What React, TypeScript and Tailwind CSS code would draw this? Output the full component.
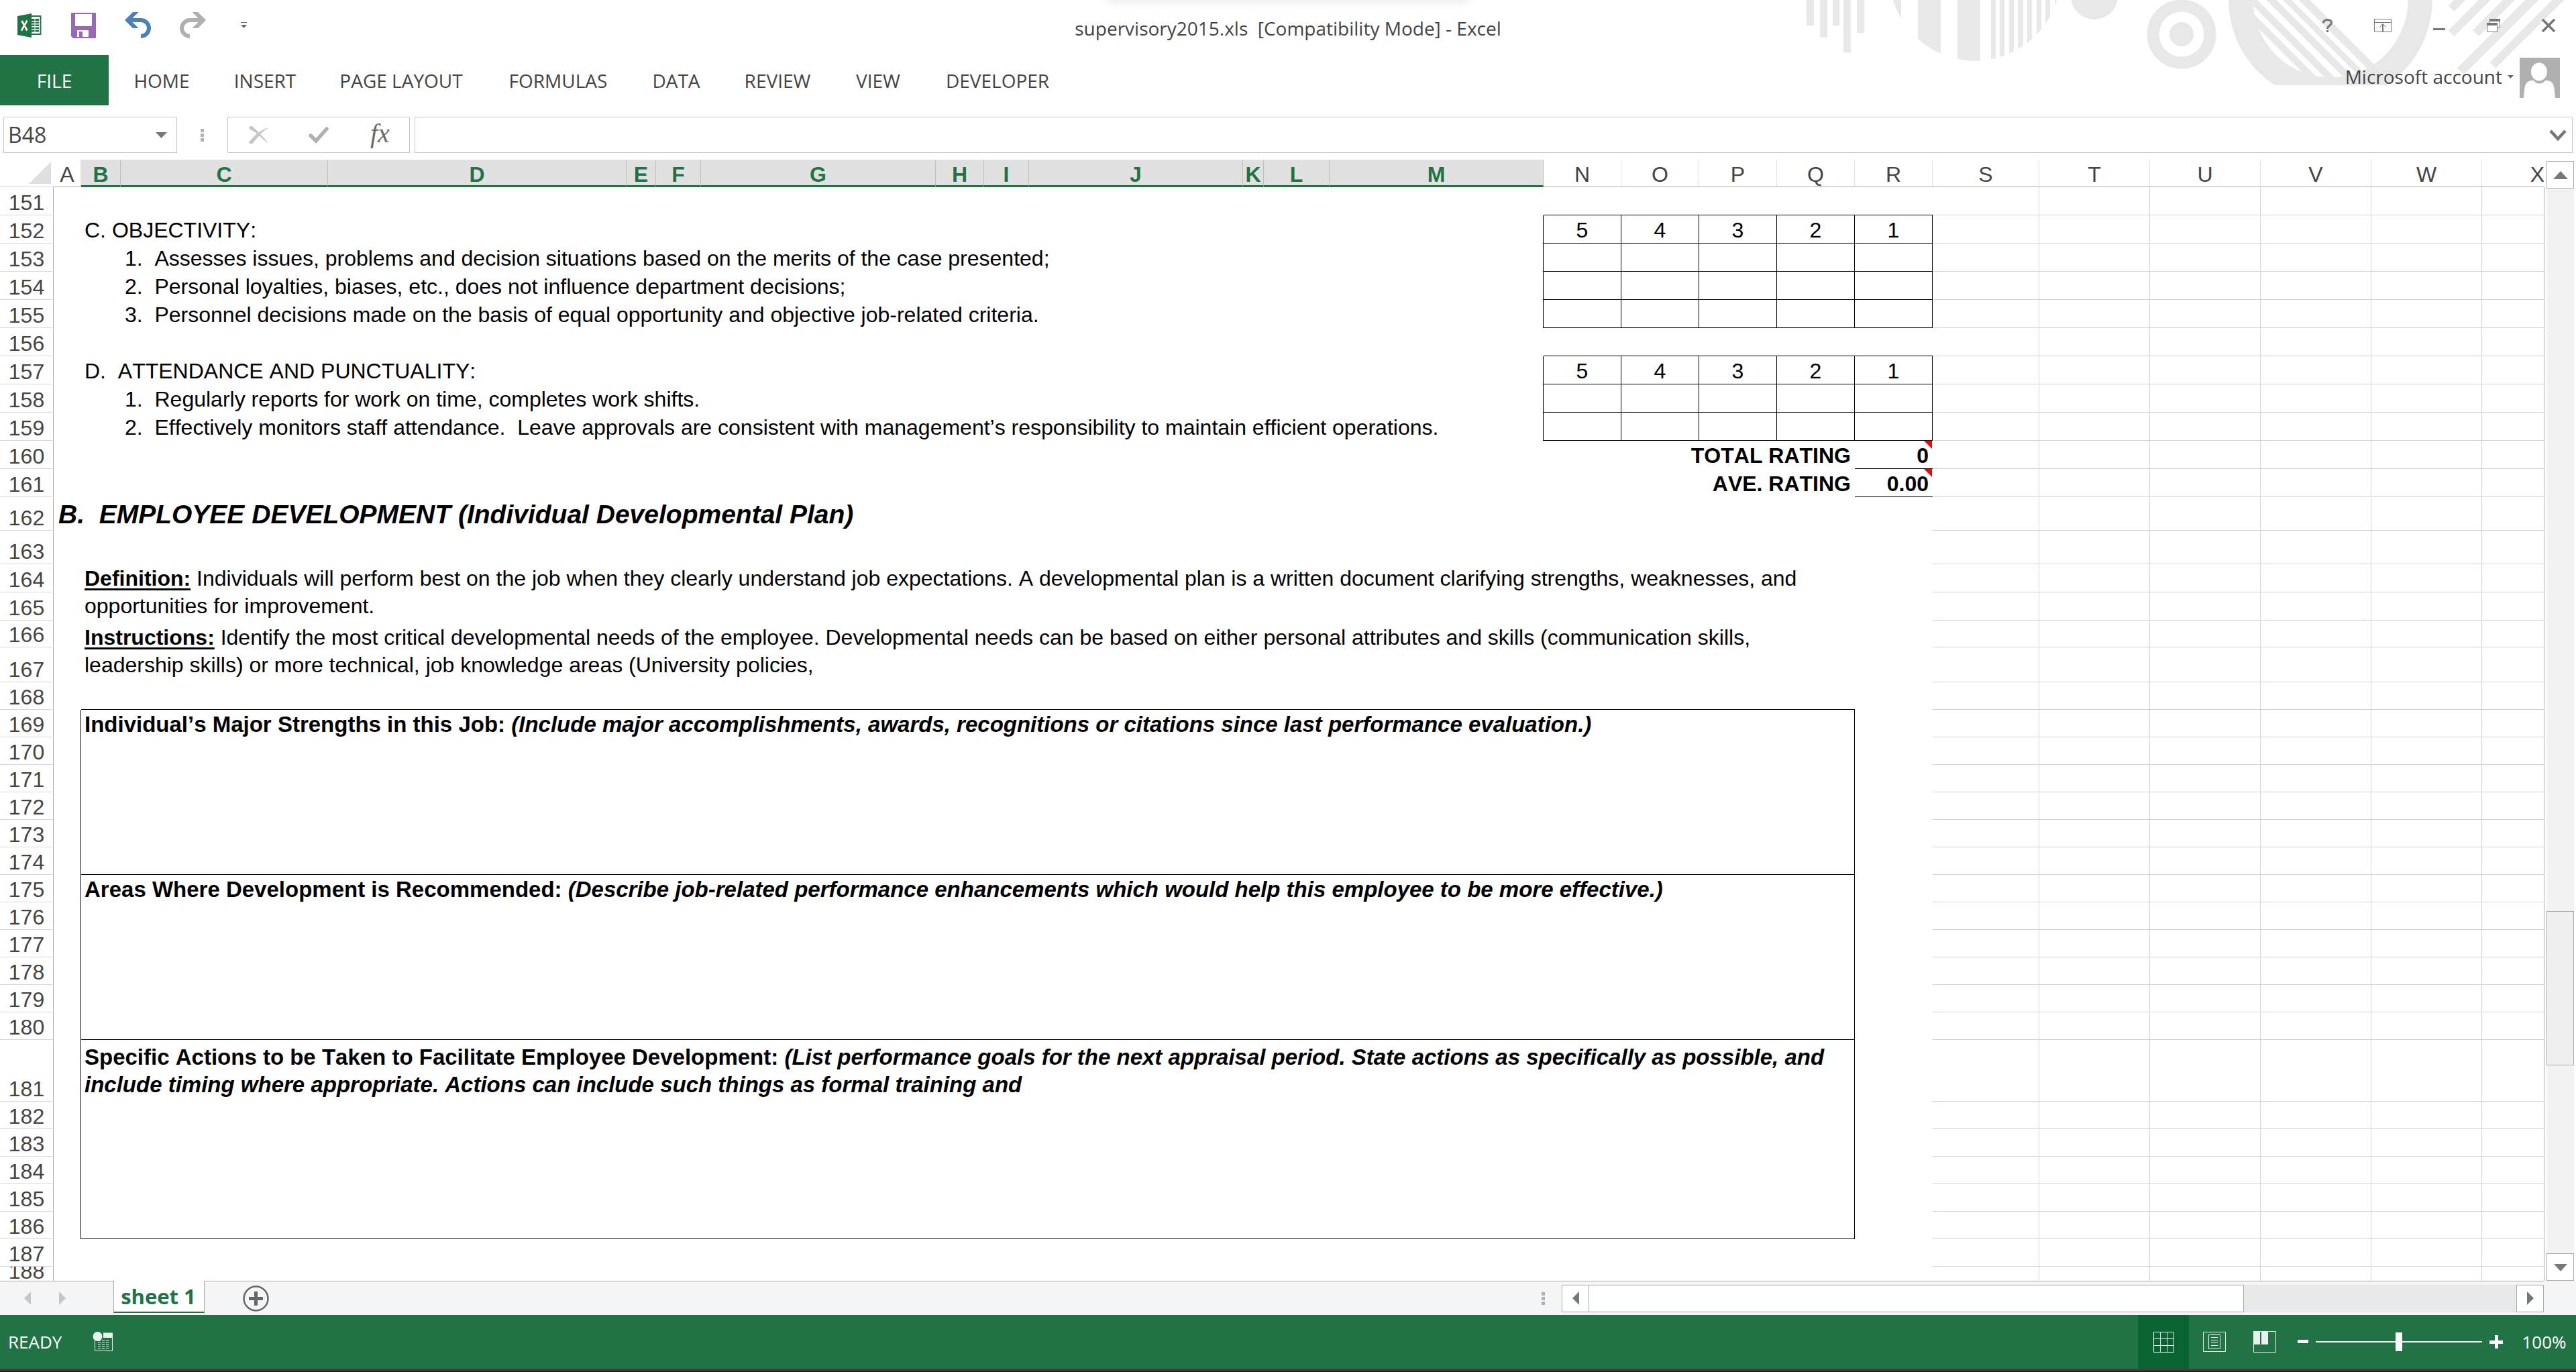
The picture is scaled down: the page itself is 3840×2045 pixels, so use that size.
import type { ReactNode } from 'react';
import { clsx } from 'clsx';

const RIBBON_TABS = [
  { label: 'HOME', width: 'w-[150px]' },
  { label: 'INSERT', width: 'w-[158px]' },
  { label: 'PAGE LAYOUT', width: 'w-[248px]' },
  { label: 'FORMULAS', width: 'w-[220px]' },
  { label: 'DATA', width: 'w-[132px]' },
  { label: 'REVIEW', width: 'w-[170px]' },
  { label: 'VIEW', width: 'w-[130px]' },
  { label: 'DEVELOPER', width: 'w-[226px]' },
];

const COLUMNS = [
  { name: 'A', width: 'w-[41px]' },
  { name: 'B', width: 'w-[59px]', selected: true },
  { name: 'C', width: 'w-[309px]', selected: true },
  { name: 'D', width: 'w-[445px]', selected: true },
  { name: 'E', width: 'w-[44px]', selected: true },
  { name: 'F', width: 'w-[67px]', selected: true },
  { name: 'G', width: 'w-[350px]', selected: true },
  { name: 'H', width: 'w-[72px]', selected: true },
  { name: 'I', width: 'w-[67px]', selected: true },
  { name: 'J', width: 'w-[319px]', selected: true },
  { name: 'K', width: 'w-[31px]', selected: true },
  { name: 'L', width: 'w-[98px]', selected: true },
  { name: 'M', width: 'w-[319px]', selected: true },
  { name: 'N', width: 'w-[116px]' },
  { name: 'O', width: 'w-[116px]' },
  { name: 'P', width: 'w-[116px]' },
  { name: 'Q', width: 'w-[116px]' },
  { name: 'R', width: 'w-[116px]' },
  { name: 'S', width: 'w-[159px]' },
  { name: 'T', width: 'w-[165px]' },
  { name: 'U', width: 'w-[165px]' },
  { name: 'V', width: 'w-[165px]' },
  { name: 'W', width: 'w-[165px]' },
  { name: 'X', width: '' },
];

const GRID_COLUMNS = ['S', 'T', 'U', 'V', 'W', 'X'];
const SCORES = ['5', '4', '3', '2', '1'];

/* ---------- sheet cells ---------- */

function Blank({ span = 18 }: { span?: number }) {
  return <td colSpan={span} className="p-0" />;
}

function RatingTop() {
  return (
    <>
      <Blank span={13} />
      <td colSpan={5} className="border-b border-black p-0" />
    </>
  );
}

interface RatingRowProps {
  children: ReactNode;
  scores?: boolean;
  indent?: boolean;
}

function RatingRow({ children, scores, indent }: RatingRowProps) {
  return (
    <>
      <Blank span={indent ? 2 : 1} />
      <td
        colSpan={indent ? 11 : 12}
        className={clsx(
          'border-r border-black p-0 pb-0.5 align-bottom whitespace-pre',
          indent ? 'pl-1.5' : 'pl-[5px]',
        )}
      >
        {children}
      </td>
      {SCORES.map((score) => (
        <td key={score} className="border-r border-b border-black p-0 pb-px text-center align-bottom">
          {scores ? score : null}
        </td>
      ))}
    </>
  );
}

function TotalRow({ label, value }: { label: string; value: string }) {
  return (
    <>
      <td colSpan={17} className="p-0 pr-1.5 pb-0.5 text-right align-bottom font-bold">
        {label}
      </td>
      <td className="relative border-b border-black p-0 pr-1.5 pb-px text-right align-bottom font-bold">
        {value}
        <svg viewBox="0 0 12 12" className="absolute top-0 right-px size-3">
          <path d="M0 0h12v12z" fill="#ff0000" />
        </svg>
      </td>
    </>
  );
}

interface MergedProps {
  rows: number;
  children: ReactNode;
  boxed?: boolean;
  className?: string;
}

function Merged({ rows, children, boxed, className }: MergedProps) {
  return (
    <>
      <td rowSpan={rows} className={clsx('p-0', boxed && 'border-r border-black')} />
      <td
        rowSpan={rows}
        colSpan={16}
        className={clsx(
          'p-0 pl-[5px] align-top leading-[41px] whitespace-nowrap',
          boxed && 'border-r border-b border-black text-[33px] font-bold',
          className,
        )}
      >
        {children}
      </td>
      <td rowSpan={rows} className="p-0" />
    </>
  );
}

interface Row {
  n: number;
  height?: string;
  cells?: ReactNode;
  covered?: boolean;
}

const ROWS: Row[] = [
  { n: 151, height: 'h-[42px]', cells: <RatingTop /> },
  { n: 152, height: 'h-[42px]', cells: <RatingRow scores>C. OBJECTIVITY:</RatingRow> },
  {
    n: 153,
    height: 'h-[42px]',
    cells: (
      <RatingRow indent>
        {'1.  Assesses issues, problems and decision situations based on the merits of the case presented;'}
      </RatingRow>
    ),
  },
  {
    n: 154,
    height: 'h-[42px]',
    cells: (
      <RatingRow indent>
        {'2.  Personal loyalties, biases, etc., does not influence department decisions;'}
      </RatingRow>
    ),
  },
  {
    n: 155,
    height: 'h-[42px]',
    cells: (
      <RatingRow indent>
        {'3.  Personnel decisions made on the basis of equal opportunity and objective job-related criteria.'}
      </RatingRow>
    ),
  },
  { n: 156, height: 'h-[42px]', cells: <RatingTop /> },
  {
    n: 157,
    height: 'h-[42px]',
    cells: <RatingRow scores>{'D.  ATTENDANCE AND PUNCTUALITY:'}</RatingRow>,
  },
  {
    n: 158,
    height: 'h-[42px]',
    cells: <RatingRow indent>{'1.  Regularly reports for work on time, completes work shifts.'}</RatingRow>,
  },
  {
    n: 159,
    height: 'h-[42px]',
    cells: (
      <RatingRow indent>
        {
          '2.  Effectively monitors staff attendance.  Leave approvals are consistent with management’s responsibility to maintain efficient operations.'
        }
      </RatingRow>
    ),
  },
  { n: 160, height: 'h-[42px]', cells: <TotalRow label="TOTAL RATING" value="0" /> },
  { n: 161, height: 'h-[42px]', cells: <TotalRow label="AVE. RATING" value="0.00" /> },
  {
    n: 162,
    height: 'h-[50px]',
    cells: (
      <td
        colSpan={18}
        className="p-0 pl-[7px] align-bottom text-[39px] leading-[48px] font-bold whitespace-pre italic"
      >
        {'B.  EMPLOYEE DEVELOPMENT (Individual Developmental Plan)'}
      </td>
    ),
  },
  { n: 163, height: 'h-[50px]' },
  {
    n: 164,
    height: 'h-[42px]',
    cells: (
      <Merged rows={2} className="pt-px">
        <b className="underline decoration-3 underline-offset-4">Definition:</b> Individuals will perform
        best on the job when they clearly understand job expectations. A developmental plan is a written
        document clarifying strengths, weaknesses, and
        <br />
        opportunities for improvement.
      </Merged>
    ),
  },
  { n: 165, height: 'h-[42px]', covered: true },
  {
    n: 166,
    height: 'h-10',
    cells: (
      <Merged rows={2} className="pt-[5px]">
        <b className="underline decoration-3 underline-offset-4">Instructions:</b> Identify the most
        critical developmental needs of the employee. Developmental needs can be based on either personal
        attributes and skills (communication skills,
        <br />
        leadership skills) or more technical, job knowledge areas (University policies,
      </Merged>
    ),
  },
  { n: 167, height: 'h-[52px]', covered: true },
  {
    n: 168,
    cells: (
      <>
        <Blank span={1} />
        <td colSpan={16} className="border-b border-black p-0" />
        <Blank span={1} />
      </>
    ),
  },
  {
    n: 169,
    cells: (
      <Merged rows={6} boxed className="pt-px">
        Individual’s Major Strengths in this Job:{' '}
        <i>
          (Include major accomplishments, awards, recognitions or citations since last performance
          evaluation.)
        </i>
      </Merged>
    ),
  },
  { n: 170, covered: true },
  { n: 171, covered: true },
  { n: 172, covered: true },
  { n: 173, covered: true },
  { n: 174, covered: true },
  {
    n: 175,
    cells: (
      <Merged rows={6} boxed className="pt-px">
        Areas Where Development is Recommended:{' '}
        <i>
          (Describe job-related performance enhancements which would help this employee to be more
          effective.)
        </i>
      </Merged>
    ),
  },
  { n: 176, covered: true },
  { n: 177, covered: true },
  { n: 178, covered: true },
  { n: 179, covered: true },
  { n: 180, covered: true },
  {
    n: 181,
    height: 'h-[92px]',
    cells: (
      <Merged rows={6} boxed className="pt-[5px]">
        Specific Actions to be Taken to Facilitate Employee Development:{' '}
        <i>
          (List performance goals for the next appraisal period. State actions as specifically as
          possible, and
          <br />
          include timing where appropriate. Actions can include such things as formal training and
        </i>
      </Merged>
    ),
  },
  { n: 182, covered: true },
  { n: 183, covered: true },
  { n: 184, covered: true },
  { n: 185, covered: true },
  { n: 186, covered: true },
  { n: 187 },
];

function GridCells() {
  return (
    <>
      {GRID_COLUMNS.map((name) => (
        <td key={name} className="border-r border-b border-[#d4d4d4] p-0 last:border-r-[#ababab]" />
      ))}
    </>
  );
}

function Sheet() {
  return (
    <table className="w-full table-fixed border-separate border-spacing-0 font-['Liberation_Sans',Arial,sans-serif] text-[32px] leading-9 text-black [font-kerning:none]">
      <colgroup>
        <col className="w-20" />
        {COLUMNS.map((col) => (
          <col key={col.name} className={col.width} />
        ))}
      </colgroup>
      <thead className="leading-8 text-[#444]">
        <tr className="h-[41px]">
          <th className="border-b border-[#d9d9d9] p-0 pr-1 pb-1 align-bottom">
            <button type="button" aria-label="Select all" className="ml-auto block">
              <svg viewBox="0 0 33 33" className="size-[33px]">
                <path d="M33 0v33H0z" fill="#dfdfdf" />
              </svg>
            </button>
          </th>
          {COLUMNS.map((col) => (
            <th
              key={col.name}
              className={clsx(
                'overflow-hidden p-0 align-bottom',
                col.selected
                  ? 'border-r border-b-3 border-r-[#bfbfbf] border-b-[#217346] bg-[#e1e1e1] font-bold text-[#217346]'
                  : 'border-r border-b border-r-[#e1e1e1] border-b-[#ababab] pb-0.5 font-normal last:border-r-transparent',
              )}
            >
              {col.name === 'X' ? <div className="w-[165px]">X</div> : col.name}
            </th>
          ))}
        </tr>
      </thead>
      <tbody>
        {ROWS.map((row) => (
          <tr key={row.n} className={row.height ?? 'h-[41px]'}>
            <th className="border-r border-b border-r-[#ababab] border-b-[#d9d9d9] p-0 align-bottom font-normal text-[#444]">
              {row.n}
            </th>
            {row.covered ? null : (row.cells ?? <Blank />)}
            <GridCells />
          </tr>
        ))}
        <tr className="h-[21px]">
          <th className="border-r border-[#ababab] p-0 font-normal text-[#444]">
            <div className="flex h-[21px] items-end justify-center overflow-hidden leading-7">188</div>
          </th>
          <Blank />
          {GRID_COLUMNS.map((name) => (
            <td key={name} className="border-r border-[#d4d4d4] p-0 last:border-r-[#ababab]" />
          ))}
        </tr>
      </tbody>
    </table>
  );
}

/* ---------- title bar ---------- */

function Backdrop() {
  return (
    <svg viewBox="0 0 1160 127" className="pointer-events-none absolute top-0 right-0 h-[127px] w-[1160px]">
      <defs>
        <clipPath id="stripeDisc">
          <circle cx="264" cy="-37" r="127.6" />
        </clipPath>
        <clipPath id="ringHole">
          <circle cx="462" cy="0" r="348" />
        </clipPath>
      </defs>
      <g fill="#e8e8e8">
        <path d="M13 0h11v38H13zM33 0h11v56H33zM52 0h10v38H52zM68 0h11v78H68zM88 0h11v49H88z" />
        <path
          clipPath="url(#stripeDisc)"
          d="M130 0h24v100h-24zM179 0h34v100h-34zM238 0h34v100h-34zM288 0h7v100h-7zM301 0h7v100h-7zM315 0h7v100h-7zM328 0h8v100h-8zM342 0h7v100h-7zM356 0h7v100h-7zM369 0h7v100h-7zM383 0h7v100h-7z"
        />
        <circle cx="442" cy="-6" r="35" />
        <circle cx="572" cy="51" r="18" />
      </g>
      <circle cx="572" cy="51" r="42.5" fill="none" stroke="#e8e8e8" strokeWidth="18" />
      <g transform="translate(640 0) scale(.33333)">
        <circle cx="462" cy="0" r="401" fill="none" stroke="#e8e8e8" strokeWidth="109" />
        <path
          clipPath="url(#ringHole)"
          fill="#e8e8e8"
          d="M12 0h45l400 400h-45zM90 0h45l400 400h-45zM175 0h45l400 400h-45zM250 0h38l400 400h-38zM320 0h50l400 400h-50z"
        />
        <path
          fill="#e8e8e8"
          d="M1015 0h52l-52 52-25-27zM1125 0h52l-162 162-25-27zM1233 0h54l-162 162-27-27zM1333 0h59l-332 332-32-27zM1453 0h54l-307 305-25-27z"
        />
      </g>
    </svg>
  );
}

function QuickAccess() {
  return (
    <div className="flex flex-1 items-center pl-[26px]">
      <svg viewBox="0 0 36 36" className="size-9" role="img" aria-label="Excel">
        <path d="M20 4h14.5v27H20" fill="#fff" stroke="#217346" strokeWidth="2" strokeLinejoin="round" />
        <g fill="#217346">
          <path d="M21 8h4.500v3H21zM26.500 8h5.500v3h-5.500zM21 12.500h4.500v2.500H21zM26.500 12.500h5.500v2.500h-5.500zM21 16.500h4.500v2.500H21zM26.500 16.500h5.500v2.500h-5.500zM21 20.500h4.500v2.500H21zM26.500 20.500h5.500v2.500h-5.500zM21 24.500h4.500v3H21zM26.500 24.500h5.500v3h-5.500z" />
          <path d="M0 4l21-4v36L0 32z" />
        </g>
        <path d="M6.500 11l8 14.500M14.500 10.500l-8.500 15" stroke="#fff" strokeWidth="2.600" />
      </svg>
      <button type="button" aria-label="Save" className="ml-11">
        <svg viewBox="0 0 37 38" className="h-[38px] w-[37px]">
          <path
            d="M1 0h35a1 1 0 0 1 1 1v36a1 1 0 0 1-1 1H3l-3-3V1a1 1 0 0 1 1-1zM6 2v17a1 1 0 0 0 1 1h23a1 1 0 0 0 1-1V2zM10 26a1 1 0 0 0-1 1v9h3v-8h5v8h8a1 1 0 0 0 1-1v-8a1 1 0 0 0-1-1z"
            fill="#9668b8"
            fillRule="evenodd"
          />
        </svg>
      </button>
      <button type="button" aria-label="Undo" className="ml-[43px]">
        <svg viewBox="0 0 39 39" className="size-[39px]">
          <path d="M12 0h8.500l-9 9H24a15 15 0 0 1 0 30v-6a9 9 0 0 0 0-18H11.500l9 9H12L0 12z" fill="#4b80ba" />
        </svg>
      </button>
      <button type="button" aria-label="Redo" className="ml-[43px]">
        <svg viewBox="0 0 39 39" className="size-[39px]">
          <path d="M27 0h-8.500l9 9H15a15 15 0 0 0 0 30v-6a9 9 0 0 1 0-18h12.500l-9 9H27L39 12z" fill="#b1b0b1" />
        </svg>
      </button>
      <button type="button" aria-label="Customize quick access toolbar" className="ml-[52px]">
        <svg viewBox="0 0 9 10" className="h-2.5 w-[9px]">
          <path d="M0 0h9v1H0zM0 4h9L4.500 9z" fill="#6a6a6a" />
        </svg>
      </button>
    </div>
  );
}

function WindowButtons() {
  return (
    <div className="flex flex-1 items-center justify-end gap-[62px] pr-[31px]">
      <button type="button" aria-label="Help">
        <svg viewBox="0 0 15 20" className="h-5 w-[15px]" fill="none" stroke="#777" strokeWidth="3">
          <path d="M1.500 6.500C1.500 3 4 1.500 7.500 1.500s6 1.500 6 4.500c0 4-6 4-6 9M7.500 17v3" />
        </svg>
      </button>
      <button type="button" aria-label="Ribbon display options">
        <svg viewBox="0 0 26 20" className="h-5 w-[26px]">
          <path
            d="M.5.500h25v19H.5zM.5 5.500h25M8.500 12.500l4.500-5 4.500 5"
            fill="#fff"
            stroke="#777"
          />
          <path d="M13 8v11" stroke="#777" strokeWidth="2" />
        </svg>
      </button>
      <button type="button" aria-label="Minimize">
        <svg viewBox="0 0 18 20" className="h-5 w-[18px]">
          <path d="M0 14h18v3H0z" fill="#777" />
        </svg>
      </button>
      <button type="button" aria-label="Restore">
        <svg viewBox="0 0 20 20" className="size-5">
          <path d="M4.500.500h15v13h-15z" fill="#fff" stroke="#777" />
          <path d="M4 0h16v4H4z" fill="#777" />
          <path d="M.5 6.500h15v13H.5z" fill="#fff" stroke="#777" />
          <path d="M0 6h16v4H0z" fill="#777" />
        </svg>
      </button>
      <button type="button" aria-label="Close">
        <svg viewBox="0 0 20 20" className="size-5">
          <path d="M1 1l18 18M19 1L1 19" stroke="#777" strokeWidth="3.500" />
        </svg>
      </button>
    </div>
  );
}

function Ribbon() {
  return (
    <nav className="flex h-[75px] text-[28px] leading-10 text-[#444]">
      <button type="button" className="w-[162px] bg-[#217346] text-white">
        FILE
      </button>
      <div className="flex pl-1">
        {RIBBON_TABS.map((tab) => (
          <button key={tab.label} type="button" className={tab.width}>
            {tab.label}
          </button>
        ))}
      </div>
      <div className="ml-auto flex items-start pr-6">
        <button type="button" className="mt-3 flex items-center gap-2">
          Microsoft account
          <svg viewBox="0 0 9 5" className="h-[5px] w-[9px]">
            <path d="M0 0h9L4.500 5z" fill="#6a6a6a" />
          </svg>
        </button>
        <svg viewBox="0 0 60 60" className="mt-1 ml-[9px] size-[60px]" role="img" aria-label="Profile">
          <path d="M0 0h60v60H0z" fill="#b0b0b0" />
          <ellipse cx="29" cy="21" rx="12" ry="13.500" fill="#fff" />
          <path
            d="M6 60c1-10 1-16 3-20 2-5 6-6 12-6 2 3 5 4.500 8.500 4.500S36 37 38 34c6 0 10 1 12 6s2 10 3 20z"
            fill="#fff"
          />
        </svg>
      </div>
    </nav>
  );
}

function Dots() {
  return (
    <svg viewBox="0 0 5 19" className="h-[19px] w-[5px]">
      <path d="M0 0h5v5H0zM0 7h5v5H0zM0 14h5v5H0z" fill="#b1b1b1" />
    </svg>
  );
}

function FormulaBar() {
  return (
    <div className="flex h-[81px] items-start pt-[17px] pr-[5px] pl-[5px]">
      <div className="flex h-[54px] w-[259px] items-center border border-[#c6c6c6]">
        <input
          aria-label="Name box"
          defaultValue="B48"
          className="w-0 flex-1 bg-transparent pl-1.5 text-[32px] text-[#444] outline-none"
        />
        <button type="button" aria-label="Open name list" className="mr-3.5">
          <svg viewBox="0 0 17 9" className="h-[9px] w-[17px]">
            <path d="M0 0h17L8.500 9z" fill="#777" />
          </svg>
        </button>
      </div>
      <div className="flex h-[54px] w-[75px] items-center justify-center">
        <Dots />
      </div>
      <div className="flex h-[54px] w-[272px] items-center border border-[#c6c6c6] pl-[31px]">
        <button type="button" aria-label="Cancel">
          <svg viewBox="0 0 29 27" className="h-[27px] w-[29px]">
            <path
              d="M1 1c2-2 5-1 6 1l8 7.500C19 6 24 3 29 2.500c-4 2.500-9 6.500-12 9.500 5 5 9 9 11 14.500-4-5-8-8.500-12.500-12-4 3.500-7 7.500-9 10.500-2 2-8 2-5.500-2 3-4 7-8 11-12C8 8 4 6 2 5 0 3.500 0 2 1 1z"
              fill="#c6c6c6"
            />
          </svg>
        </button>
        <button type="button" aria-label="Enter" className="ml-[60px]">
          <svg viewBox="0 0 30 25" className="h-[25px] w-[30px]">
            <path d="M3 13l8 8L27 3" fill="none" stroke="#b1b1b1" strokeWidth="5.500" strokeLinecap="round" />
          </svg>
        </button>
        <button
          type="button"
          aria-label="Insert function"
          className="ml-[62px] pb-1 font-['Liberation_Serif',serif] text-[40px] leading-10 text-[#6a6a6a] italic"
        >
          fx
        </button>
      </div>
      <div className="ml-[7px] flex h-[54px] flex-1 items-center border border-[#c6c6c6] pr-2">
        <input aria-label="Formula" className="h-full w-0 flex-1 bg-transparent px-2 text-[32px] outline-none" />
        <button type="button" aria-label="Expand formula bar">
          <svg viewBox="0 0 26 17" className="h-[17px] w-[26px]">
            <path d="M2 2l11 12L24 2" fill="none" stroke="#777" strokeWidth="4.500" />
          </svg>
        </button>
      </div>
    </div>
  );
}

/* ---------- scroll bars and status ---------- */

const ARROWS = {
  up: 'M0 17L11 5l11 12z',
  down: 'M1 6l10 11L21 6z',
  left: 'M16 1L6 11l10 10z',
  right: 'M6 1l10 10L6 21z',
};

interface ScrollButtonProps {
  direction: keyof typeof ARROWS;
}

function ScrollButton({ direction }: ScrollButtonProps) {
  return (
    <button
      type="button"
      aria-label={`Scroll ${direction}`}
      className="flex size-[41px] shrink-0 items-center justify-center border border-[#ababab] bg-white"
    >
      <svg viewBox="0 0 22 22" className="size-[22px]">
        <path d={ARROWS[direction]} fill="#777" />
      </svg>
    </button>
  );
}

function VerticalScroll() {
  return (
    <div className="flex w-[47px] shrink-0 flex-col items-center pt-0.5">
      <ScrollButton direction="up" />
      <div className="flex w-[41px] flex-1 flex-col bg-[#f2f2f2]">
        <div className="flex-[1079]" />
        <div className="flex-[228] border border-[#ababab] bg-[#efefef]" />
        <div className="flex-[281]" />
      </div>
      <ScrollButton direction="down" />
    </div>
  );
}

function SheetTabs() {
  return (
    <div className="flex h-[51px] bg-[#f5f5f5] pr-12">
      <div className="flex flex-[97] items-start">
        <div className="flex h-full w-[169px] items-center gap-[42px] border-t border-[#ababab] pl-9">
          <button type="button" aria-label="Previous sheet">
            <svg viewBox="0 0 10 20" className="h-5 w-2.5">
              <path d="M10 0v20L0 10z" fill="#c6c6c6" />
            </svg>
          </button>
          <button type="button" aria-label="Next sheet">
            <svg viewBox="0 0 10 20" className="h-5 w-2.5">
              <path d="M0 0v20l10-10z" fill="#c6c6c6" />
            </svg>
          </button>
        </div>
        <button
          type="button"
          className="h-12 w-[136px] border-x border-b-2 border-x-[#ababab] border-b-[#217346] bg-white pr-0.5 text-[31px] leading-10 font-bold text-[#217346]"
        >
          sheet 1
        </button>
        <div className="flex h-full flex-1 items-center justify-between border-t border-[#ababab] pr-[25px] pl-[57px]">
          <button type="button" aria-label="New sheet">
            <svg viewBox="0 0 39 39" className="size-[39px]" fill="none" stroke="#666">
              <circle cx="19.500" cy="19.500" r="18" strokeWidth="2.500" />
              <path d="M19.500 9v21M9 19.500h21" strokeWidth="5" />
            </svg>
          </button>
          <Dots />
        </div>
      </div>
      <div className="flex flex-[61] items-center border-t border-[#ababab]">
        <ScrollButton direction="left" />
        <div className="flex h-[41px] flex-1 bg-[#e9e9e9]">
          <div className="flex-[976] border-y border-r border-[#ababab] bg-white" />
          <div className="flex-[407]" />
        </div>
        <ScrollButton direction="right" />
      </div>
    </div>
  );
}

function StatusBar() {
  return (
    <footer className="flex h-20 items-center bg-[#217346] text-[26px] text-white">
      <span className="w-[138px] pl-3">READY</span>
      <button type="button" aria-label="Record macro">
        <svg viewBox="0 0 30 30" className="size-[30px]">
          <path d="M3.500 9v19.500h26V2H16" fill="none" stroke="#e8f1ec" />
          <path d="M16 2h14v7H16z" fill="#e8f1ec" />
          <circle cx="7.500" cy="7" r="7" fill="#e8f1ec" />
          <path
            d="M8 13.500h16M8 16.500h16M8 19.500h16M8 22.500h16M8 25.500h16"
            stroke="#e8f1ec"
            strokeDasharray="4 2"
          />
        </svg>
      </button>
      <div className="ml-auto flex h-full items-center">
        <button type="button" aria-label="Normal view" className="flex h-full w-[76px] items-center justify-center bg-[#0a6332]">
          <svg viewBox="0 0 31 31" className="size-[31px]" fill="none" stroke="#e8f1ec">
            <path d="M.5.500h30v30H.5zM10.500 0v31M20.500 0v31M0 10.500h31M0 20.500h31" />
          </svg>
        </button>
        <button type="button" aria-label="Page layout view" className="ml-[21px]">
          <svg viewBox="0 0 34 30" className="h-[30px] w-[34px]" fill="none" stroke="#e8f1ec">
            <path d="M.5.500h33v29H.5zM8.500 4.500h17v21h-17zM12 8.500h10M12 12.500h10M12 16.500h10M12 20.500h10" />
          </svg>
        </button>
        <button type="button" aria-label="Page break view" className="ml-[41px]">
          <svg viewBox="0 0 34 32" className="h-8 w-[34px]">
            <path d="M.5.500h33v31H.5z" fill="none" stroke="#e8f1ec" />
            <path d="M0 0h10v20H0zM12 0h10v20H12z" fill="#e8f1ec" />
          </svg>
        </button>
        <button type="button" aria-label="Zoom out" className="ml-8">
          <svg viewBox="0 0 16 20" className="h-5 w-4">
            <path d="M0 7h16v5H0z" fill="#fff" />
          </svg>
        </button>
        <input
          type="range"
          aria-label="Zoom"
          min={0}
          max={100}
          defaultValue={50}
          className="mx-[11px] h-7 w-[248px] appearance-none bg-transparent [&::-webkit-slider-runnable-track]:h-0.5 [&::-webkit-slider-runnable-track]:bg-white [&::-webkit-slider-thumb]:-mt-[13px] [&::-webkit-slider-thumb]:h-7 [&::-webkit-slider-thumb]:w-2.5 [&::-webkit-slider-thumb]:appearance-none [&::-webkit-slider-thumb]:bg-white"
        />
        <button type="button" aria-label="Zoom in">
          <svg viewBox="0 0 20 20" className="size-5">
            <path d="M0 8h20v5H0zM8 0h5v20H8z" fill="#fff" />
          </svg>
        </button>
        <button type="button" className="w-[109px] pl-3.5 text-center">
          100%
        </button>
      </div>
    </footer>
  );
}

export default function App() {
  return (
    <div className="flex h-screen flex-col overflow-hidden bg-white font-['Open_Sans','Noto_Sans',sans-serif]">
      <header className="relative">
        <div className="absolute -top-4 left-1/2 h-4 w-[540px] -translate-x-1/2 shadow-[0_0_16px_rgba(0,0,0,0.12)]" />
        <Backdrop />
        <div className="relative flex h-[82px] items-start">
          <div className="flex h-[75px] flex-1">
            <QuickAccess />
          </div>
          <h1 className="pt-[22px] text-[28px] leading-10 whitespace-pre text-[#444]">
            {'supervisory2015.xls  [Compatibility Mode] - Excel'}
          </h1>
          <div className="flex h-[76px] flex-1">
            <WindowButtons />
          </div>
        </div>
        <div className="relative">
          <Ribbon />
        </div>
      </header>
      <FormulaBar />
      <main className="flex min-h-0 flex-1">
        <div className="min-w-0 flex-1 overflow-hidden">
          <Sheet />
        </div>
        <VerticalScroll />
      </main>
      <SheetTabs />
      <StatusBar />
      <div className="h-[5px] border-t-3 border-[#4a4040] bg-[#2a1614]" />
    </div>
  );
}
